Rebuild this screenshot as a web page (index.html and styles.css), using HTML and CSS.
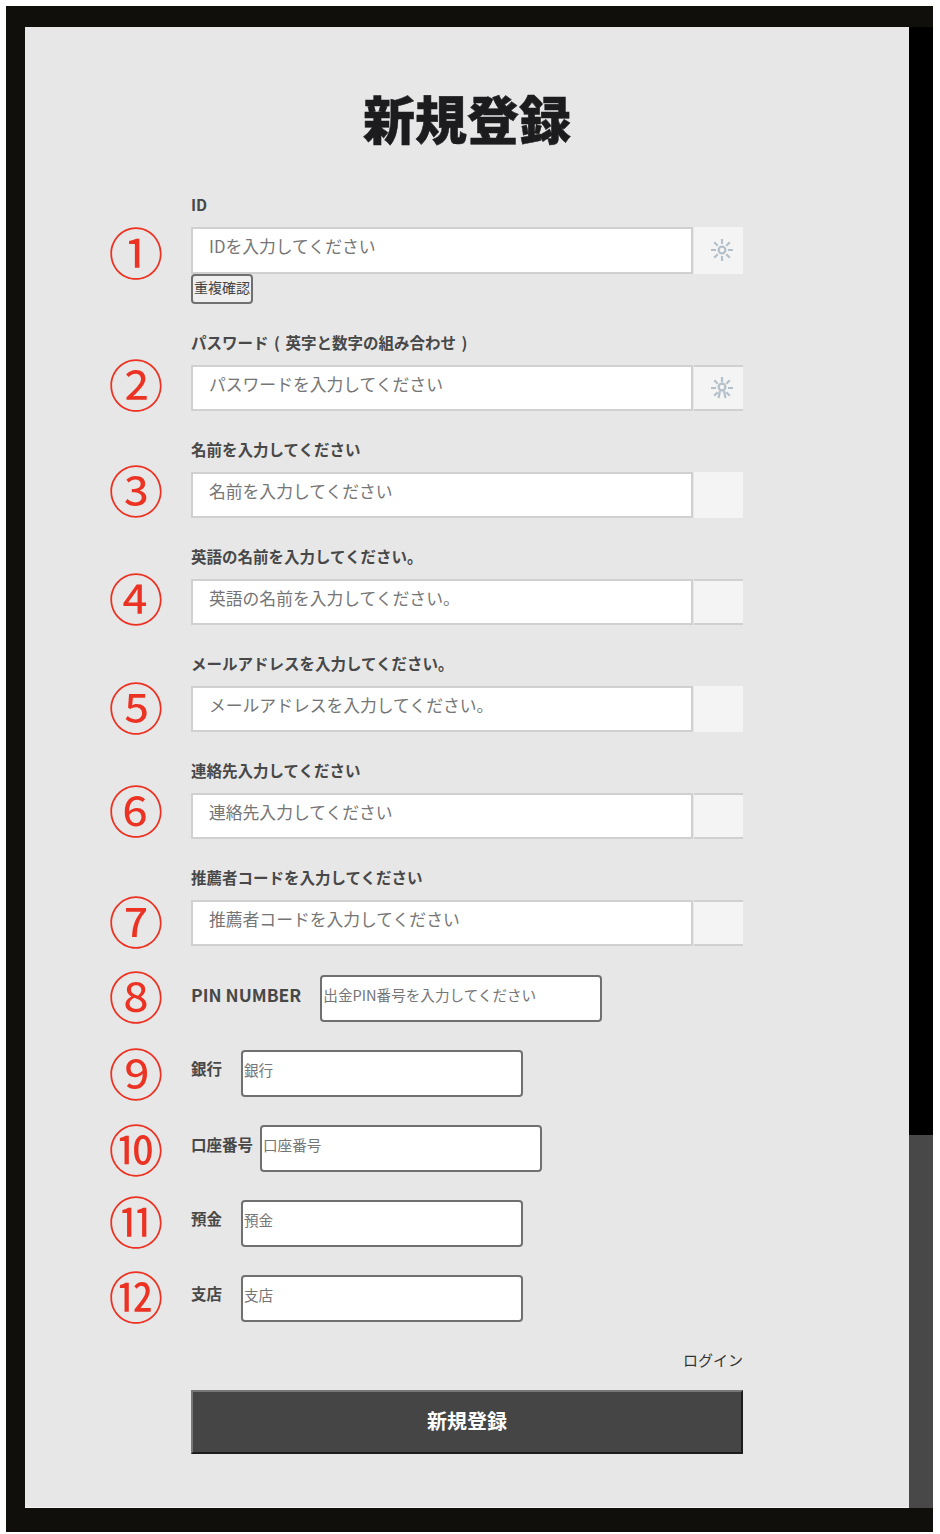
FILE: index.html
```html
<!DOCTYPE html>
<html lang="ja">
<head>
    <meta charset="UTF-8">
    <meta name="viewport" content="width=device-width, initial-scale=1.0">
    <title>新規登録</title>
    <link rel="stylesheet" href="styles.css">
</head>
<body>
    <div class="frame">
        <div class="panel">
            <h1 class="title">新規登録</h1>

            <form class="form">
                <div class="field">
                    <label class="field-label">ID</label>
                    <div class="input-group">
                        <input class="text-input" type="text" placeholder="IDを入力してください">
                        <span class="addon">
                            <svg class="addon-icon" viewBox="0 0 24 24"><circle cx="12" cy="12" r="3.400"/><path d="M12 1v5M12 18v5M1 12h5M18 12h5M4.200 4.200l3.500 3.500M16.300 16.300l3.500 3.500M19.800 4.200l-3.500 3.500M7.700 16.300l-3.500 3.500"/></svg>
                        </span>
                    </div>
                    <button class="check-button" type="button">重複確認</button>
                </div>

                <div class="field">
                    <label class="field-label">パスワード ( 英字と数字の組み合わせ )</label>
                    <div class="input-group">
                        <input class="text-input" type="password" placeholder="パスワードを入力してください">
                        <span class="addon addon-lined">
                            <svg class="addon-icon" viewBox="0 0 24 24"><circle cx="12" cy="11" r="3.400"/><path d="M12 1v5M10 15l-1.500 7M14 15l1.500 7M1 12h5M18 12h5M4.200 4.200l3.500 3.500M16.300 16.300l3.500 3.500M19.800 4.200l-3.500 3.500M7.700 16.300l-3.500 3.500"/></svg>
                        </span>
                    </div>
                </div>

                <div class="field">
                    <label class="field-label">名前を入力してください</label>
                    <div class="input-group">
                        <input class="text-input" type="text" placeholder="名前を入力してください">
                        <span class="addon"></span>
                    </div>
                </div>

                <div class="field">
                    <label class="field-label">英語の名前を入力してください。</label>
                    <div class="input-group">
                        <input class="text-input" type="text" placeholder="英語の名前を入力してください。">
                        <span class="addon addon-lined"></span>
                    </div>
                </div>

                <div class="field">
                    <label class="field-label">メールアドレスを入力してください。</label>
                    <div class="input-group">
                        <input class="text-input" type="text" placeholder="メールアドレスを入力してください。">
                        <span class="addon"></span>
                    </div>
                </div>

                <div class="field">
                    <label class="field-label">連絡先入力してください</label>
                    <div class="input-group">
                        <input class="text-input" type="text" placeholder="連絡先入力してください">
                        <span class="addon addon-lined"></span>
                    </div>
                </div>

                <div class="field">
                    <label class="field-label">推薦者コードを入力してください</label>
                    <div class="input-group">
                        <input class="text-input" type="text" placeholder="推薦者コードを入力してください">
                        <span class="addon addon-lined"></span>
                    </div>
                </div>

                <div class="inline-row">
                    <label class="inline-label pin-label">PIN NUMBER</label>
                    <input class="box-input" type="text" placeholder="出金PIN番号を入力してください">
                </div>

                <div class="inline-row">
                    <label class="inline-label">銀行</label>
                    <input class="box-input" type="text" placeholder="銀行">
                </div>

                <div class="inline-row">
                    <label class="inline-label tight-label">口座番号</label>
                    <input class="box-input" type="text" placeholder="口座番号">
                </div>

                <div class="inline-row">
                    <label class="inline-label">預金</label>
                    <input class="box-input" type="text" placeholder="預金">
                </div>

                <div class="inline-row">
                    <label class="inline-label">支店</label>
                    <input class="box-input" type="text" placeholder="支店">
                </div>

                <div class="login-link"><a href="#">ログイン</a></div>
                <button class="submit-button" type="button">新規登録</button>
            </form>

            <!-- red numbers drawn over the form -->
            <span class="mark mark-1">①</span>
            <span class="mark mark-2">②</span>
            <span class="mark mark-3">③</span>
            <span class="mark mark-4">④</span>
            <span class="mark mark-5">⑤</span>
            <span class="mark mark-6">⑥</span>
            <span class="mark mark-7">⑦</span>
            <span class="mark mark-8">⑧</span>
            <span class="mark mark-9">⑨</span>
            <span class="mark mark-10">⑩</span>
            <span class="mark mark-11">⑪</span>
            <span class="mark mark-12">⑫</span>
        </div>

        <div class="side">
            <div class="side-top"></div>
            <div class="side-bottom"></div>
        </div>
    </div>
</body>
</html>
```

FILE: styles.css
```css
* {
    margin: 0;
    padding: 0;
    box-sizing: border-box;
}

body {
    font-family: "Noto Sans CJK JP", sans-serif;
    background: #fff;
    padding: 6px 7px 2px 6px;
}

.frame {
    display: flex;
    height: 1526px;
    padding: 21px 0 24px 19px;
    background: #110f0c;
}

.panel {
    position: relative;
    flex: 1;
    padding-top: 61px;
    background: #e7e7e7;
    border-bottom: 1px solid #f4f4f4;
}

.side {
    display: flex;
    flex-direction: column;
    width: 24px;
}

.side-top {
    height: 1108px;
    background: #000;
}

.side-bottom {
    flex: 1;
    background: #484848;
}

.title {
    height: 60px;
    margin-bottom: 47px;
    font-size: 52px;
    font-weight: 900;
    line-height: 60px;
    text-align: center;
    color: #1c1c1e;
    -webkit-text-stroke: 0.5px #1c1c1e;
}

.form {
    width: 552px;
    margin-left: 166px;
}

.field {
    margin-bottom: 28.5px;
}

.field-label {
    display: block;
    height: 22px;
    margin-bottom: 10px;
    font-size: 15.500px;
    font-weight: 700;
    line-height: 19px;
    word-spacing: 2px;
    color: #484848;
}

.input-group {
    display: flex;
    gap: 1px;
    height: 46.500px;
}

.text-input {
    width: 502px;
    padding: 0 16px 8px;
    border: 2px solid #d0d0d0;
    background: #fff;
    font-family: inherit;
    font-size: 16.800px;
}

.addon {
    display: flex;
    align-items: center;
    justify-content: center;
    flex: 1;
    padding-left: 7px;
    background: #f4f4f4;
}

.addon-lined {
    border-top: 2px solid #d0d0d0;
    border-bottom: 2px solid #d0d0d0;
}

.addon-icon {
    width: 24px;
    height: 24px;
    fill: none;
    stroke: #b4c0c9;
    stroke-width: 2.200;
}

.check-button {
    display: block;
    width: 62px;
    height: 30.500px;
    padding-bottom: 4px;
    border: 2px solid #707070;
    border-radius: 4px;
    background: #efefef;
    font-family: inherit;
    font-size: 14px;
    color: #444;
}

.inline-row {
    display: flex;
    align-items: flex-start;
    height: 46.500px;
    margin-bottom: 28.500px;
}

.inline-label {
    margin: 7px 19px 0 0;
    font-size: 15.500px;
    font-weight: 700;
    line-height: 22px;
    color: #484848;
}

.pin-label {
    margin-top: 9px;
    font-size: 17.500px;
}

.tight-label {
    margin: 8px 7px 0 0;
}

.box-input {
    width: 282px;
    height: 47px;
    padding: 0 1px 7px;
    border: 2px solid #707070;
    border-radius: 4px;
    background: #fff;
    font-family: inherit;
    font-size: 14.600px;
}

.login-link {
    height: 22px;
    margin: -1px 0 19px;
    font-size: 15px;
    line-height: 22px;
    text-align: right;
}

.login-link a {
    color: #333;
    text-decoration: none;
}

.submit-button {
    display: block;
    width: 100%;
    height: 64px;
    padding-bottom: 2px;
    border: 2px solid;
    border-color: #777 #1c1c1c #1c1c1c #777;
    background: #454545;
    font-family: inherit;
    font-size: 20px;
    font-weight: 700;
    color: #fff;
}

.mark {
    position: absolute;
    left: 85px;
    display: flex;
    align-items: center;
    justify-content: center;
    width: 52px;
    height: 52px;
    margin-top: -3px;
    font-size: 55px;
    line-height: 52px;
    color: #ec3323;
}

.mark-1 { top: 200px; }
.mark-2 { top: 332px; }
.mark-3 { top: 438px; }
.mark-4 { top: 546px; }
.mark-5 { top: 655px; }
.mark-6 { top: 758px; }
.mark-7 { top: 869px; }
.mark-8 { top: 944px; }
.mark-9 { top: 1021px; }
.mark-10 { top: 1097px; }
.mark-11 { top: 1169px; }
.mark-12 { top: 1244px; }
```
